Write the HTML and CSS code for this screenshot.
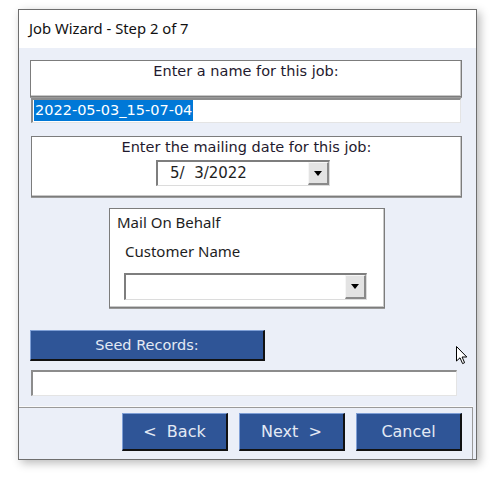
FILE: index.html
```html
<!DOCTYPE html>
<html lang="en">
<head>
  <meta charset="UTF-8" />
  <title>Job Wizard</title>
  <link rel="stylesheet" href="styles.css">
</head>
<body>
  <div class="window">
    <div class="title-bar">Job Wizard - Step 2 of 7</div>

    <div class="content">
      <!-- Job name -->
      <div class="group name-group">
        <div class="group-label">Enter a name for this job:</div>
      </div>
      <div class="field name-field"><span class="selected">2022-05-03_15-07-04</span></div>

      <!-- Mailing date -->
      <div class="group date-group">
        <div class="group-label">Enter the mailing date for this job:</div>
        <div class="combo date-combo">
          <span class="combo-text">5/&nbsp;&nbsp;3/2022</span>
          <span class="combo-btn"><span class="arrow"></span></span>
        </div>
      </div>

      <!-- Mail on behalf -->
      <div class="group behalf-group">
        <div class="behalf-title">Mail On Behalf</div>
        <div class="behalf-label">Customer Name</div>
        <div class="combo customer-combo">
          <span class="combo-text"></span>
          <span class="combo-btn"><span class="arrow"></span></span>
        </div>
      </div>

      <button class="btn seed-btn">Seed Records:</button>
      <div class="field seed-field"></div>

      <svg class="cursor" width="12" height="19" viewBox="0 0 12 19">
        <path d="M0.5 0.5 L0.5 15 L4 11.8 L6.6 17.6 L8.6 16.7 L6.1 11 L10.8 11 Z" fill="#fff" stroke="#000" stroke-width="1" stroke-linejoin="round"/>
      </svg>
    </div>

    <div class="footer">
      <button class="btn nav-btn">&lt;&nbsp; Back</button>
      <button class="btn nav-btn">Next&nbsp; &gt;</button>
      <button class="btn nav-btn">Cancel</button>
    </div>
  </div>
</body>
</html>
```

FILE: styles.css
```css
* {
  margin: 0;
  padding: 0;
  box-sizing: border-box;
}
html, body {
  width: 100%;
  height: 100%;
  background: #fff;
}
body {
  font-family: 'DejaVu Sans', sans-serif;
  color: #1e1e1e;
}
.window {
  position: relative;
  margin: 9px 0 0 18px;
  width: 459px;
  height: 451px;
  border: 1px solid #6e6e6e;
  background: #ebeff8;
  box-shadow: 3px 3px 9px rgba(0, 0, 0, 0.28);
  display: flex;
  flex-direction: column;
}
.title-bar {
  height: 38px;
  background: #fff;
  padding: 8px 0 0 10px;
  font-family: 'Noto Sans', sans-serif;
  font-size: 14.8px;
  color: #111;
}
.content {
  position: relative;
  flex: 1;
  padding: 12px 0 0 11px;
}
.group {
  background: #fff;
  border: 1px solid #7c7c7c;
  box-shadow: inset -1px -1px 0 #c8c8c8, 0 1px 0 #9a9a9a;
}
.group-label {
  text-align: center;
  font-size: 14.5px;
  color: #1f1a2e;
}
.name-group {
  width: 432px;
  height: 37px;
  padding-top: 2px;
}
.field {
  background: #fff;
  border-top: 2px solid #8c8c8c;
  border-left: 2px solid #8c8c8c;
  border-right: 1px solid #e4e4e4;
  border-bottom: 1px solid #e4e4e4;
}
.name-field {
  margin: 1px 0 0 1px;
  width: 430px;
  height: 25px;
  padding: 0 0 0 1px;
  font-size: 14.5px;
  line-height: 21px;
}
.selected {
  background: #0078d7;
  color: #fff;
  display: inline-block;
  padding: 0 1px;
}
.date-group {
  margin: 13px 0 0 1px;
  width: 431px;
  height: 61px;
  padding-top: 2px;
  display: flex;
  flex-direction: column;
}
.combo {
  display: flex;
  background: #fff;
  border-top: 2px solid #7e7e7e;
  border-left: 2px solid #7e7e7e;
  border-right: 1px solid #dcdcdc;
  border-bottom: 1px solid #dcdcdc;
}
.combo-text {
  flex: 1;
  font-size: 15px;
  line-height: 23px;
}
.combo-btn {
  width: 21px;
  background: #e3e3e3;
  border-left: 1px solid #f6f6f6;
  border-top: 1px solid #f6f6f6;
  border-right: 2px solid #8a8a8a;
  border-bottom: 2px solid #8a8a8a;
  display: flex;
  justify-content: center;
  align-items: center;
}
.arrow {
  width: 0;
  height: 0;
  border-left: 4.5px solid transparent;
  border-right: 4.5px solid transparent;
  border-top: 5px solid #000;
}
.date-combo {
  margin: 5px 0 0 124px;
  width: 174px;
  height: 26px;
}
.date-combo .combo-text {
  padding-left: 12px;
}
.behalf-group {
  margin: 11px 0 0 79px;
  width: 276px;
  height: 100px;
  padding: 3px 0 0 7px;
}
.behalf-title {
  font-family: 'Noto Sans', sans-serif;
  font-size: 15px;
  line-height: 21px;
}
.behalf-label {
  font-family: 'Noto Sans', sans-serif;
  font-size: 15px;
  line-height: 21px;
  margin: 8px 0 0 8px;
}
.customer-combo {
  margin: 11px 0 0 7px;
  width: 243px;
  height: 27px;
}
.btn {
  display: flex;
  justify-content: center;
  align-items: center;
  background: #2f5597;
  color: #e3e9f4;
  font-family: 'DejaVu Sans', sans-serif;
  border-top: 1px solid #7f9fd6;
  border-left: 1px solid #7f9fd6;
  border-right: 2px solid #111;
  border-bottom: 2px solid #111;
  cursor: pointer;
}
.seed-btn {
  margin-top: 22px;
  width: 235px;
  height: 31px;
  font-size: 14.5px;
}
.seed-field {
  margin: 9px 0 0 1px;
  width: 426px;
  height: 26px;
}
.cursor {
  position: absolute;
  left: 437px;
  top: 298px;
}
.footer {
  height: 52px;
  margin-right: 3px;
  border-top: 1px solid #9a9a9a;
  border-right: 1px solid #9a9a9a;
  box-shadow: 0 -1px 0 #fafafa;
  display: flex;
  justify-content: flex-end;
  gap: 11px;
  padding: 5px 10px 0 0;
}
.nav-btn {
  width: 106px;
  height: 38px;
  font-size: 16px;
}
```
